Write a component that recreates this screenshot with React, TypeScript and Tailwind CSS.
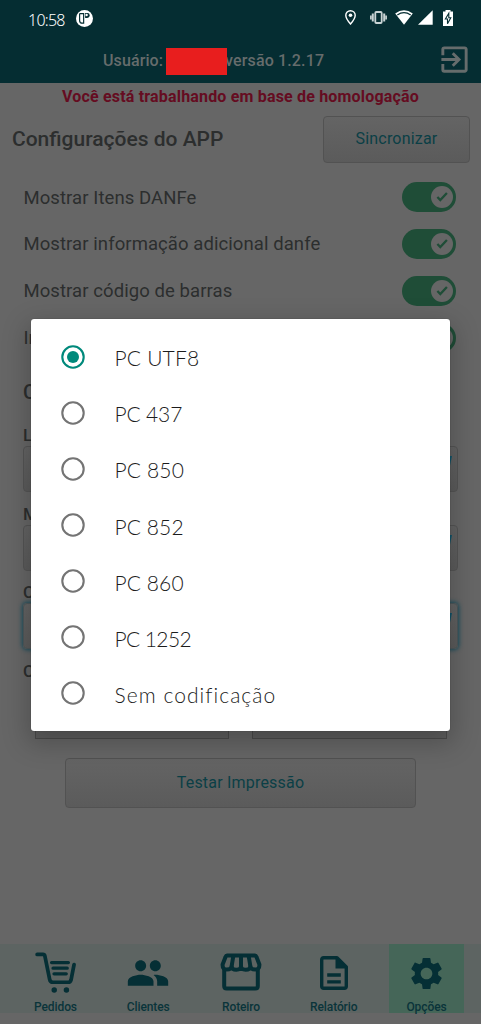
import React from "react";
import { MdOutlineExitToApp, MdPeople, MdSettings } from "react-icons/md";

const encodings = [
  { name: "PC UTF8", spacing: "tracking-[0.2px]" },
  { name: "PC 437", spacing: "tracking-[-0.15px]" },
  { name: "PC 850", spacing: "tracking-[0.15px]" },
  { name: "PC 852", spacing: "tracking-[0.1px]" },
  { name: "PC 860", spacing: "tracking-[0.1px]" },
  { name: "PC 1252", spacing: "tracking-[-0.6px]" },
  { name: "Sem codificação", spacing: "tracking-[1.05px]" },
];

function StatusBar() {
  return (
    <div className="flex h-[38px] items-center pl-[28px] pr-[27px] text-white">
      <span className="mt-[2px] w-[48px] font-['Noto_Sans',sans-serif] text-[16px] font-light leading-none tracking-[-0.75px]">10:58</span>
      <svg className="mt-[-2px]" width="17" height="17" viewBox="0 0 16 16">
        <circle cx="8" cy="8" r="8" fill="white" />
        <path d="M4 3.4H7.2V12.4H6Q3.4 12.4 3.4 9.8V4Q3.4 3.4 4 3.4Z" fill="white" stroke="#052d32" strokeWidth="1.1" />
        <path d="M8.6 2.9V7.6Q12.9 7.6 12.9 5.2Q12.9 2.9 10.8 2.9Z" fill="#052d32" />
        <circle cx="10" cy="4.7" r="1.1" fill="white" />
      </svg>
      <div className="mt-[-3px] ml-auto flex items-center">
        <svg width="11" height="15" viewBox="0 0 11 15" fill="none" stroke="white" strokeWidth="1.4">
          <path d="M5.5 14Q.8 8.8.8 5.3A4.7 4.6 0 0 1 10.2 5.3Q10.2 8.8 5.5 14Z" />
          <circle cx="5.5" cy="5.2" r="1.8" fill="white" stroke="none" />
        </svg>
        <svg className="ml-[14px]" width="17" height="13" viewBox="0 0 17 13" fill="none" stroke="#c9d3d4">
          <rect x="5.3" y="1" width="6.4" height="11" rx="1" strokeWidth="1.8" />
          <path d="M2.8 2.5V10.5M14.2 2.5V10.5" strokeWidth="2" />
          <path d="M.9 4.5V8.5M16.1 4.5V8.5" strokeWidth="1.7" />
        </svg>
        <svg className="ml-[8px]" width="18" height="15" viewBox="0 0 18 15">
          <path d="M.2 3.6Q9-3.2 17.8 3.6L9 14.8Z" fill="white" />
          <path d="M2.3 4.9Q9 .4 15.7 4.9" fill="none" stroke="#052d32" strokeWidth="1.2" />
        </svg>
        <svg className="ml-[5px]" width="15" height="15" viewBox="0 0 15 15">
          <path d="M14.7.2V14.8H0Z" fill="white" />
        </svg>
        <svg className="ml-[10px] mr-[1px]" width="10" height="16" viewBox="0 0 10 16">
          <path d="M2.5 0H7.5V1.5H10V16H0V1.5H2.5Z" fill="white" />
          <path d="M5.8 3.3L2.4 9H4.5V13.8L7.8 7.7H5.8Z" fill="none" stroke="#052d32" strokeWidth="1.1" />
        </svg>
      </div>
    </div>
  );
}

function Toggle() {
  return (
    <span className="flex h-[30px] w-[54px] items-center justify-end rounded-full bg-[#1f4d37] pr-[3px]">
      <svg width="22" height="22" viewBox="0 0 22 22">
        <circle cx="11" cy="11" r="11" fill="#666" />
        <path d="M6.4 11L9.3 14L15.9 7" fill="none" stroke="#1f4d37" strokeWidth="2.3" />
      </svg>
    </span>
  );
}

function SettingRow({ label }: { label: string }) {
  return (
    <div className="flex h-[46.8px] items-center justify-between pl-[23.5px] pr-[25px]">
      <span className="mt-[2px] text-[18.5px] tracking-[0.08px]">{label}</span>
      <Toggle />
    </div>
  );
}

function Field({ label, focused = false }: { label: string; focused?: boolean }) {
  return (
    <div className="flex h-[78.5px] flex-col pl-[23px] pr-[23px]">
      <span className="h-[22px] shrink-0 text-[17px] font-medium leading-[22px]">{label}</span>
      <div
        className={
          focused
            ? "flex h-[46px] items-start justify-end rounded-[4px] border border-[#4d575a] bg-linear-to-b from-[#646464] to-[#5b5b5b] pr-[5px] pt-[9px] shadow-[0_0_4px_1px_#174e5e]"
            : "flex h-[46px] items-start justify-end rounded-[4px] border border-[#555] bg-linear-to-b from-[#646464] to-[#5b5b5b] pr-[5px] pt-[9px]"
        }
      >
        <svg width="12" height="29" viewBox="0 0 12 29">
          <path d="M0 0H12L6 29Z" fill="#12566c" />
        </svg>
      </div>
    </div>
  );
}

function CartIcon() {
  return (
    <svg className="mt-[1px]" width="41" height="41" viewBox="0 0 42 42" fill="none" stroke="#052f35" strokeLinejoin="round">
      <path d="M2.2 2.5H8.2Q9.7 2.5 10.1 4L15 28Q15.6 31 18.3 31H34Q36.3 31 36.9 28.7L40 13" strokeWidth="3.8" strokeLinecap="round" />
      <path d="M17 10.8H34.2M18.5 16.6H33M19.5 22.4H32" strokeWidth="3.4" strokeLinecap="round" />
      <circle cx="19.7" cy="39" r="2.8" fill="#052f35" stroke="none" />
      <circle cx="32.2" cy="39" r="2.8" fill="#052f35" stroke="none" />
    </svg>
  );
}

function StoreIcon() {
  return (
    <svg width="42" height="38" viewBox="0 0 42 38" fill="none" stroke="#052f35" strokeWidth="4" strokeLinejoin="round">
      <path d="M4.2 16V33Q4.2 35.5 6.7 35.5H35.3Q37.8 35.5 37.8 33V16" />
      <path d="M7 2.5H35Q36 2.5 36.4 3.8L39.4 11.5Q39.6 16.5 35.2 16.5Q30.8 16.5 30.4 13.5Q30 16.8 25.7 16.8Q21.2 16.8 21 13.5Q20.8 16.8 16.3 16.8Q12 16.8 11.6 13.5Q11.2 16.5 6.8 16.5Q2.4 16.5 2.6 11.5L5.6 3.8Q6 2.5 7 2.5Z" />
      <path d="M13.4 2.5L11.6 13.5M21 2.5V13.5M28.6 2.5L30.4 13.5" />
    </svg>
  );
}

function ReportIcon() {
  return (
    <svg className="mt-[2px]" width="28" height="34" viewBox="0 0 28 34" fill="none" stroke="#052f35">
      <path d="M3.7 1.7H17L26.3 11V30.3Q26.3 32.3 24.3 32.3H3.7Q1.7 32.3 1.7 30.3V3.7Q1.7 1.7 3.7 1.7Z" strokeWidth="3.4" strokeLinejoin="round" />
      <path d="M15.5 1L27.5 12.5H15.5Z" fill="#052f35" stroke="none" />
      <path d="M7.2 19H20.8M7.2 25.8H20.8" strokeWidth="3.3" />
    </svg>
  );
}

function Tab({ label, active = false, children }: { label: string; active?: boolean; children: React.ReactNode }) {
  return (
    <div
      className={
        active
          ? "flex h-[69px] w-[75px] flex-col items-center bg-[#456658]"
          : "flex h-[69px] w-[75px] flex-col items-center"
      }
    >
      <div className="flex h-[56px] shrink-0 items-center justify-center">{children}</div>
      <span className="text-[12px] font-medium leading-[14px] tracking-[-0.1px]">{label}</span>
    </div>
  );
}

function EncodingDialog() {
  return (
    <div className="absolute left-[30.5px] top-[318.5px] h-[412px] w-[419px] rounded-[3px] bg-white pt-[10px] shadow-[0_9px_26px_4px_rgba(0,0,0,0.22),0_0_1px_rgba(0,0,0,0.5)]">
      {encodings.map(({ name, spacing }, i) => (
        <div key={name} className="flex h-[56.1px] items-center pl-[30px]">
          <svg className="shrink-0" width="24" height="24" viewBox="0 0 24 24">
            <circle cx="12" cy="12" r="10.7" fill="none" stroke={i === 0 ? "#00897b" : "#747474"} strokeWidth="2.1" />
            {i === 0 && <circle cx="12" cy="12" r="6" fill="#00897b" />}
          </svg>
          <span className={`ml-[30px] mt-[3px] font-['Lato',sans-serif] text-[21px] font-light text-[#1c1c1c] ${spacing}`}>{name}</span>
        </div>
      ))}
    </div>
  );
}

export default function App() {
  return (
    <div className="relative flex h-[1024px] w-[481px] flex-col overflow-hidden bg-[#666] font-['Roboto',sans-serif] text-[#2c2e2e]">
      <header className="h-[83px] shrink-0 bg-[#052d32]">
        <StatusBar />
        <div className="flex h-[45px] items-center pl-[103px] pr-[9px] text-[16px] font-medium text-[#666c6c]">
          <span className="w-[63px] whitespace-nowrap tracking-[0.1px]">Usuário:</span>
          <span className="z-10 mt-[1px] h-[27px] w-[61px] bg-[#e81e1e]" />
          <span className="ml-[-2px] whitespace-nowrap tracking-[0.15px]">versão 1.2.17</span>
          <MdOutlineExitToApp className="mt-[-3px] ml-auto" size={35} color="#666c6c" />
        </div>
      </header>

      <div className="h-[28px] shrink-0 text-center text-[16px] font-bold leading-[28px] tracking-[0.18px] text-[#650c21]">
        Você está trabalhando em base de homologação
      </div>

      <div className="flex h-[63px] shrink-0 items-start justify-between pl-[12px] pr-[11px] pt-[4.5px]">
        <h1 className="text-[21px] font-medium leading-[47px]">Configurações do APP</h1>
        <button className="h-[47px] w-[147px] rounded-[4px] border border-[#525252] bg-linear-to-b from-[#646464] to-[#5b5b5b] text-[16px] tracking-[0.2px] text-[#0b3f46]">
          Sincronizar
        </button>
      </div>

      <div className="h-[187px] shrink-0">
        <SettingRow label="Mostrar Itens DANFe" />
        <SettingRow label="Mostrar informação adicional danfe" />
        <SettingRow label="Mostrar código de barras" />
        <SettingRow label="In" />
      </div>

      <h2 className="h-[63px] shrink-0 pl-[23px] pt-[16px] text-[20px] font-medium leading-[30px]">C</h2>

      <Field label="L" />
      <Field label="M" />
      <Field label="C" focused />
      <div className="flex h-[79px] shrink-0 flex-col pl-[23px]">
        <span className="h-[22px] text-[17px] font-medium leading-[22px]">C</span>
        <div className="flex flex-1 gap-[23px] pl-[12px]">
          <div className="w-[194px] border border-[#4b4b4b] bg-[#5e5e5e]" />
          <div className="w-[195px] border border-[#4b4b4b] bg-[#5e5e5e]" />
        </div>
      </div>

      <button className="ml-[65px] mt-[19px] h-[50px] w-[351px] shrink-0 rounded-[4px] border border-[#525252] bg-linear-to-b from-[#646464] to-[#5b5b5b] text-[16px] tracking-[0.2px] text-[#0b3f46]">
        Testar Impressão
      </button>

      <nav className="mb-[11px] mt-auto flex h-[69px] shrink-0 justify-between bg-[#5d6462] pl-[18px] pr-[17px] text-[#0a343a]">
        <Tab label="Pedidos"><CartIcon /></Tab>
        <Tab label="Clientes"><MdPeople className="mt-[2px]" size={44} color="#052f35" /></Tab>
        <Tab label="Roteiro"><StoreIcon /></Tab>
        <Tab label="Relatório"><ReportIcon /></Tab>
        <Tab label="Opções" active><MdSettings className="mt-[2px]" size={39} color="#052f35" /></Tab>
      </nav>

      <EncodingDialog />
    </div>
  );
}
